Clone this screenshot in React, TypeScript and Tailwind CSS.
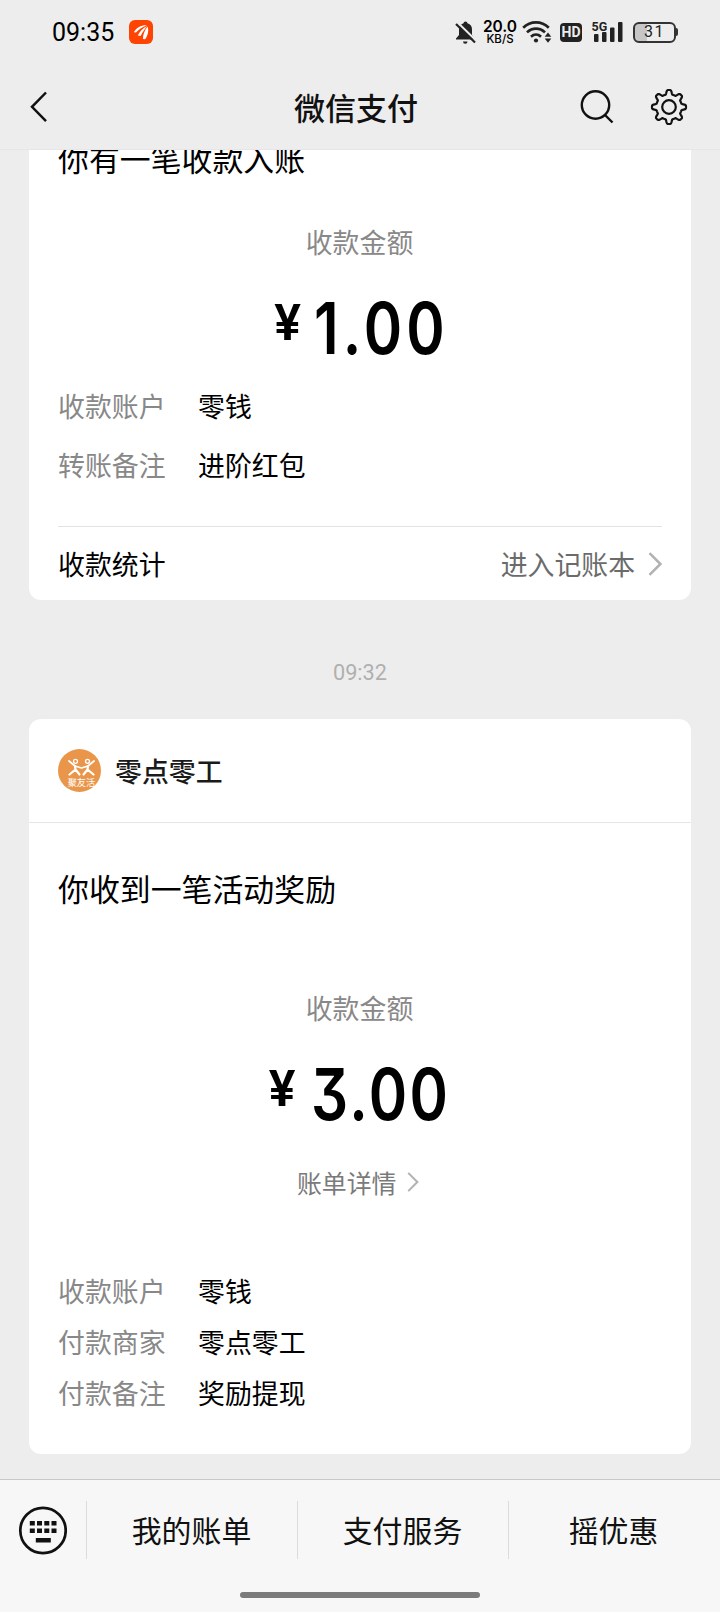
import React from "react";

interface DetailRow {
  label: string;
  value: string;
}

const incomeRows: DetailRow[] = [
  { label: "收款账户", value: "零钱" },
  { label: "转账备注", value: "进阶红包" },
];

const rewardRows: DetailRow[] = [
  { label: "收款账户", value: "零钱" },
  { label: "付款商家", value: "零点零工" },
  { label: "付款备注", value: "奖励提现" },
];

const menuItems = ["我的账单", "支付服务", "摇优惠"];

// outline of an eight-tooth gear around (0, 0)
const gearPath = (() => {
  const points: string[] = [];
  for (let i = 0; i < 240; i++) {
    const a = (i / 240) * Math.PI * 2;
    const t = Math.min(1, Math.max(0, (Math.cos(a * 8) + 0.6) / 1.5));
    const r = 12.8 + 4.2 * t * t * (3 - 2 * t);
    points.push(`${(r * Math.cos(a)).toFixed(2)} ${(r * Math.sin(a)).toFixed(2)}`);
  }
  return `M${points.join("L")}Z`;
})();

const StatusBar = () => (
  <div className="flex h-16 items-center pl-[52px] pr-[42px] text-black">
    <span className="pt-[2px] font-[Roboto] text-[25px] leading-8">09:35</span>
    <svg className="ml-[15px]" width="24" height="24" viewBox="0 0 24 24">
      <rect width="24" height="24" rx="6" fill="#fe4302" />
      <path d="M4.800 12.300C7.500 7.500 12.500 5 17.800 5.300C13.500 7 10 9.300 7 12.600Z" fill="#fff" />
      <path d="M8.800 15.600C10.500 11.500 14 8 18.200 5.900C15.800 9 13.500 12 11.600 15.900Z" fill="#fff" />
      <path d="M14 19C13.700 14.500 15.800 10 18.600 6.500C20 11 18.700 15.500 16.200 19.300Z" fill="#fff" />
    </svg>

    <div className="ml-auto flex items-center text-[#222]">
      <svg width="21" height="23" viewBox="0 0 21 23" fill="currentColor">
        <path d="M10.500 0.500a2 2 0 0 1 2 1.800C15.500 3.200 17 5.500 17 8.500V14l2.500 3.500V18.500H1V17.500L4 14V8.500C4 5.500 5.500 3.200 8.500 2.300A2 2 0 0 1 10.500 0.500Z" />
        <path d="M8 20.500h4.500a2.200 2.200 0 0 1-4.500 0Z" />
        <path d="M2 1L21 19.500" stroke="#ededed" strokeWidth="2.200" />
        <path d="M1 3L20 21.500" stroke="currentColor" strokeWidth="2.200" />
      </svg>
      <div className="ml-[7px] flex w-[34px] flex-col items-center font-[Inter] text-black">
        <span className="text-[15.500px] font-semibold leading-[14px]">20.0</span>
        <span className="text-[11.500px] font-medium leading-[11px]">KB/S</span>
      </div>
      <svg className="ml-[5px]" width="30" height="24" viewBox="0 0 30 24" fill="none">
        <g stroke="currentColor" strokeWidth="2.700">
          <path d="M1.200 7.700C8.500 0.700 19.500 0.700 26.800 7.700" />
          <path d="M5 12.400C10.200 7.400 17.800 7.400 23 12.400" />
          <path d="M9 16.700C12 14 16 14 19 16.700" />
        </g>
        <circle cx="14" cy="20.500" r="2.100" fill="currentColor" />
        <path d="M26 12.500l3.300 4.300h-6.600ZM26 22.700l3.300-4.300h-6.600Z" fill="currentColor" />
      </svg>
      <div className="ml-[8px] flex h-[19px] w-[22px] items-center justify-center rounded-[4px] bg-[#222] font-[Roboto] text-[14px] font-bold leading-none text-[#ededed]">
        HD
      </div>
      <svg className="ml-[9px]" width="32" height="24" viewBox="0 0 32 24" fill="currentColor">
        <text x="0.500" y="10.800" fontFamily="Roboto" fontWeight="700" fontSize="12.500">
          5G
        </text>
        <rect x="3" y="14" width="4.500" height="8" rx="1" />
        <rect x="11" y="12" width="4.500" height="10" rx="1" />
        <rect x="19" y="7.500" width="4.500" height="14.500" rx="1" />
        <rect x="27" y="2" width="4.500" height="20" rx="1" />
      </svg>
      <div className="ml-[10px] flex items-center">
        <div className="flex h-[21px] w-[43px] items-center justify-center rounded-[6px] border-2 border-[#333] bg-linear-to-r from-[#c6c6c6] from-30% to-transparent to-30% font-[Roboto] text-[16px] leading-none tracking-[1.500px]">
          31
        </div>
        <div className="h-[8px] w-[2px] rounded-r bg-[#333]" />
      </div>
    </div>
  </div>
);

const NavBar = () => (
  <div className="grid h-[86px] grid-cols-[1fr_auto_1fr] items-center border-b border-[#e6e6e6] pl-[30px] pr-[32px]">
    <svg width="18" height="32" viewBox="0 0 18 32" fill="none">
      <path d="M16 1.500L2 15.800L16 30.200" stroke="#111" strokeWidth="2.500" />
    </svg>
    <h1 className="pr-[6px] text-[31px] font-medium leading-10 text-[#111]">微信支付</h1>
    <div className="flex items-center justify-end gap-[36px]">
      <svg width="34" height="34" viewBox="0 0 34 34" fill="none" stroke="#111" strokeWidth="2.400">
        <circle cx="15.500" cy="15" r="13.700" />
        <path d="M25 25L32.500 32.500" />
      </svg>
      <svg width="38" height="38" viewBox="-19 -19 38 38" fill="none" stroke="#111" strokeWidth="2.200">
        <path d={gearPath} strokeLinejoin="round" />
        <circle r="6.800" />
      </svg>
    </div>
  </div>
);

const Chevron: React.FC<{ size: number; className?: string }> = ({ size, className }) => (
  <svg
    className={className}
    width={size * 0.58}
    height={size}
    viewBox="0 0 14 24"
    fill="none"
    stroke="#b2b2b2"
    strokeWidth="2.500"
  >
    <path d="M1.500 1L12.500 12L1.500 23" />
  </svg>
);

// digits are condensed, so the box takes the width they have after scaling
const Amount: React.FC<{ value: string; className: string }> = ({ value, className }) => (
  <div className={`flex h-20 items-center justify-center text-black ${className}`}>
    <span className="pb-[12px] font-[Roboto] text-[50px] font-semibold leading-none">¥</span>
    <span className="w-[138px] whitespace-nowrap pb-[2px]">
      <span className="inline-block origin-left scale-x-[0.82] font-[Inter] text-[71px] font-semibold leading-none [font-feature-settings:'cv09']">
        {value}
      </span>
    </span>
  </div>
);

const Details: React.FC<{ rows: DetailRow[]; className: string }> = ({ rows, className }) => (
  <dl className={`flex flex-col text-[26.900px] leading-9 ${className}`}>
    {rows.map((row) => (
      <div key={row.label} className="flex">
        <dt className="w-[140px] text-[#888]">{row.label}</dt>
        <dd className="text-black">{row.value}</dd>
      </div>
    ))}
  </dl>
);

const MerchantLogo = () => (
  <svg width="43" height="43" viewBox="0 0 43 43">
    <circle cx="21.500" cy="21.500" r="21.500" fill="#e9964a" />
    <g fill="none" stroke="#fff" strokeWidth="1.800" strokeLinecap="round" strokeLinejoin="round">
      <circle cx="17.500" cy="12.300" r="2" strokeWidth="1.300" />
      <circle cx="29.500" cy="12.300" r="2" strokeWidth="1.300" />
      <path d="M11 12L17 17L23.500 19L30 17L36 12" />
      <path d="M17 17L17.500 20.500L11.500 25.500M17.500 20.500L21.500 25.500" strokeWidth="2.200" />
      <path d="M30 17L29.500 20.500L25.500 25.500M29.500 20.500L35.500 25.500" strokeWidth="2.200" />
    </g>
    <text x="9.700" y="36.500" fill="#fff" fontSize="9.200">
      聚友活
    </text>
  </svg>
);

const KeyboardIcon = () => (
  <svg width="49" height="49" viewBox="0 0 49 49" fill="#111">
    <circle cx="25" cy="24.500" r="22.700" fill="none" stroke="#111" strokeWidth="2.700" />
    {[15, 22.500].map((y) =>
      [11.800, 19, 26.300, 33.500].map((x) => (
        <rect key={`${x}-${y}`} x={x} y={y} width="5" height="4.500" />
      ))
    )}
    <rect x="17.800" y="32" width="15" height="4.500" />
  </svg>
);

export default function App() {
  return (
    <div
      lang="zh-CN"
      className="flex h-[1612px] w-[720px] flex-col overflow-hidden bg-[#ededed] font-['Noto_Sans_CJK_SC',sans-serif]"
    >
      <header>
        <StatusBar />
        <NavBar />
      </header>

      <main className="flex flex-1 flex-col overflow-hidden px-[29px]">
        <section className="-mt-3 rounded-b-xl bg-white px-[29px]">
          <h2 className="text-[30.900px] leading-10 text-black">你有一笔收款入账</h2>
          <p className="mt-[46px] pr-px text-center text-[26.900px] leading-9 text-[#888]">收款金额</p>
          <Amount value="1.00" className="mt-[29px] gap-[8px] pl-[6px] tracking-[5px]" />
          <Details rows={incomeRows} className="mt-[19px] gap-[23px]" />
          <div className="mt-[43px] flex h-[74px] items-center border-t border-[#e3e3e3] pt-px text-[26.900px]">
            <span className="text-black">收款统计</span>
            <span className="ml-auto text-[#6b6b6b]">进入记账本</span>
            <Chevron size={24} className="ml-[13px]" />
          </div>
        </section>

        <time className="mb-[26px] mt-[53px] text-center font-[Roboto] text-[21.700px] leading-10 text-[#b0b0b0]">
          09:32
        </time>

        <section className="rounded-xl bg-white pb-[43px]">
          <div className="flex h-[104px] items-center border-b border-[#e6e6e6] px-[29px]">
            <MerchantLogo />
            <span className="ml-[14px] pt-[2px] text-[26.900px] font-medium text-[#1a1a1a]">零点零工</span>
          </div>
          <div className="px-[29px] pt-[45px]">
            <h2 className="text-[30.900px] leading-10 text-black">你收到一笔活动奖励</h2>
            <p className="mt-[82px] pr-px text-center text-[26.900px] leading-9 text-[#888]">收款金额</p>
            <Amount value="3.00" className="mt-[29px] gap-[13px] pr-[2px] tracking-[3px]" />
            <div className="mt-[29px] flex items-center justify-center pr-[4px] text-[24.900px] leading-9 text-[#7a7a7a]">
              账单详情
              <Chevron size={20} className="ml-[11px]" />
            </div>
            <Details rows={rewardRows} className="mt-[73px] gap-[15px]" />
          </div>
        </section>
      </main>

      <footer className="flex h-[133px] flex-col items-center border-t border-[#c8c8c8] bg-[#f7f7f7]">
        <nav className="mt-[21px] flex h-[58px] w-full items-center pl-[18px]">
          <KeyboardIcon />
          <div className="ml-[19px] flex h-full">
            {menuItems.map((item) => (
              <button
                key={item}
                className="flex w-[211px] items-center justify-center border-l border-[#dcdcdc] pb-px pr-px text-[29.900px] text-[#111]"
              >
                {item}
              </button>
            ))}
          </div>
        </nav>
        <div className="mt-[33px] h-[6px] w-[240px] rounded-full bg-[#7b7b7b]" />
      </footer>
    </div>
  );
}
